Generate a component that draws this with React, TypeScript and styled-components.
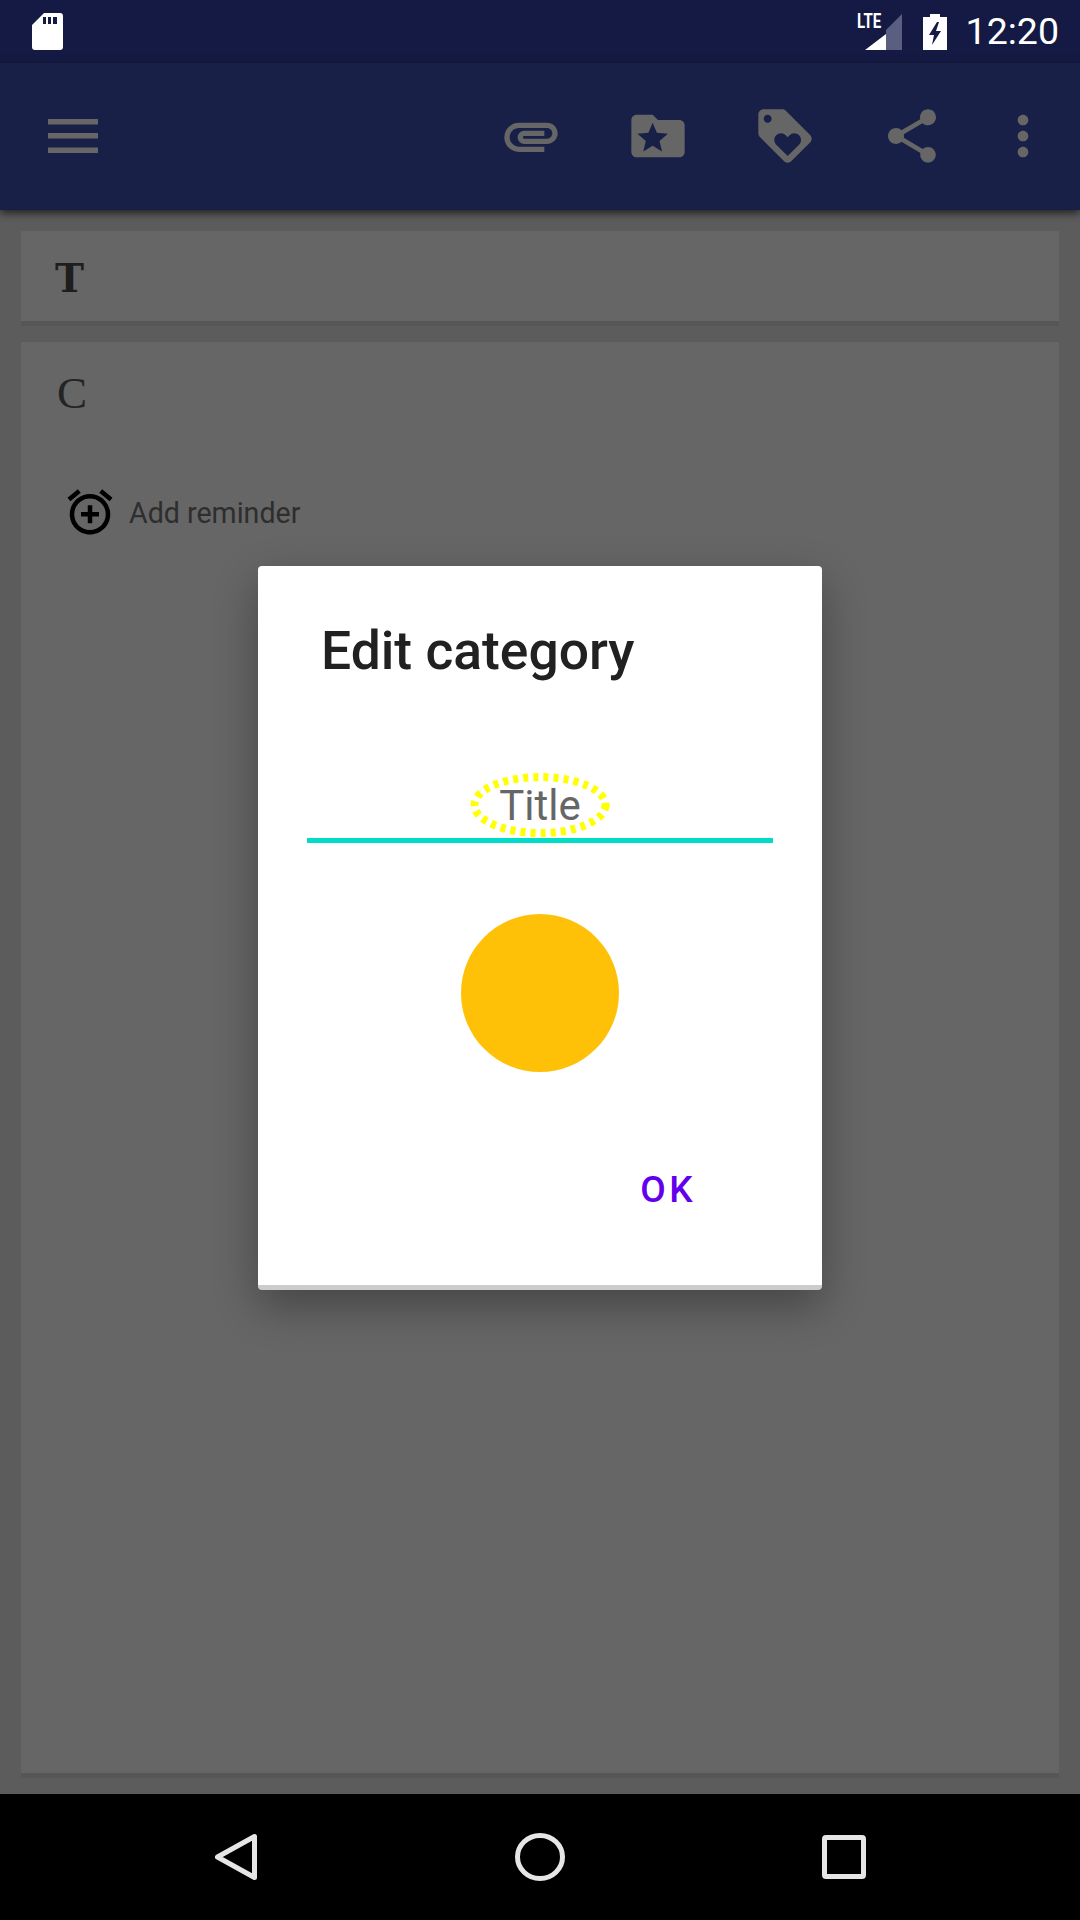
import { createGlobalStyle, styled } from "styled-components";

const Global = createGlobalStyle`
  html, body { margin: 0; padding: 0; background: #000; }
  #root { width: 1080px; height: 1920px; }
`;

const Screen = styled.div`
  position: relative;
  width: 1080px;
  height: 1920px;
  display: flex;
  flex-direction: column;
  overflow: hidden;
  font-family: Roboto, "Liberation Sans", sans-serif;
`;

const StatusBar = styled.div`
  height: 63px;
  flex: none;
  background: #141a43;
  display: flex;
  align-items: center;
  justify-content: space-between;
  padding: 0 21px 0 32px;
  color: #fff;
`;

const StatusRight = styled.div`
  display: flex;
  align-items: center;
`;

const Signal = styled.div`
  position: relative;
  width: 37px;
  height: 36px;
  margin-right: 21px;
`;

const Lte = styled.span`
  position: absolute;
  left: -8px;
  top: 0;
  font-size: 20px;
  font-weight: 700;
  line-height: 15px;
  transform: scaleX(0.75);
  transform-origin: left center;
`;

const Clock = styled.span`
  font-size: 37.5px;
  margin-left: 19px;
  line-height: 63px;
`;

const Toolbar = styled.div`
  height: 147px;
  box-sizing: border-box;
  flex: none;
  background: #182048;
  display: flex;
  align-items: center;
  justify-content: space-between;
  padding: 0 25px 1px 48px;
  box-shadow: 0 3px 8px rgba(0, 0, 0, 0.65);
  position: relative;
  z-index: 1;
`;

const MenuIcon = styled.svg`
  width: 50px;
  height: 34px;
  fill: #666;
  display: block;
`;

const ActionIcon = styled.svg`
  width: 64px;
  height: 64px;
  flex: none;
  fill: #666;
  display: block;
`;

const OverflowIcon = styled(ActionIcon)`
  margin-left: -15.5px;
`;

const Actions = styled.div`
  display: flex;
  align-items: center;
  gap: 63px;
`;

const Content = styled.div`
  flex: 1;
  background: #5c5c5c;
  padding: 21px 21px 16px;
  display: flex;
  flex-direction: column;
  gap: 16px;
`;

const Card = styled.div<{ $grow?: boolean }>`
  background: #666;
  border-bottom: 5px solid #565656;
  flex: ${(p) => (p.$grow ? 1 : "none")};
  padding-left: 34px;
`;

const TitleCard = styled(Card)`
  height: 90px;
  box-sizing: content-box;
  display: flex;
  align-items: center;
`;

const CardTitle = styled.span`
  font-family: "DejaVu Serif", "Liberation Serif", serif;
  font-weight: 700;
  font-size: 39px;
  color: #1e1e1e;
  padding-top: 4px;
`;

const CardBody = styled.div`
  font-family: "Liberation Serif", "DejaVu Serif", serif;
  font-size: 45px;
  color: #242424;
  padding: 26px 0 0 2px;
  line-height: 50px;
`;

const ReminderRow = styled.div`
  display: flex;
  align-items: center;
  gap: 12px;
  margin-top: 67px;
  padding-left: 8px;
`;

const ReminderIcon = styled.svg`
  width: 54px;
  height: 54px;
  fill: #000;
  display: block;
`;

const ReminderText = styled.span`
  font-size: 28.6px;
  color: #2e2e2e;
  padding-top: 2px;
`;

const NavBar = styled.div`
  height: 126px;
  flex: none;
  background: #000;
  display: flex;
  align-items: center;
  justify-content: space-between;
  padding: 0 214px 0 215px;
`;

const Dialog = styled.div`
  position: absolute;
  left: 258px;
  top: 566px;
  width: 564px;
  height: 724px;
  box-sizing: border-box;
  background: #fff;
  border-radius: 4px;
  border-bottom: 5px solid #ccc;
  box-shadow: 0 16px 44px rgba(0, 0, 0, 0.33);
  z-index: 2;
  display: flex;
  flex-direction: column;
  align-items: center;
`;

const DialogTitle = styled.div`
  align-self: flex-start;
  margin: 50px 0 0 63px;
  font-size: 53.4px;
  font-weight: 500;
  line-height: 70px;
  color: #212121;
`;

const Field = styled.div`
  position: relative;
  width: 466px;
  height: 66px;
  margin-top: 86px;
  border-bottom: 5px solid #00dcc8;
  text-align: center;
  font-size: 42px;
  line-height: 68px;
  color: #666;
`;

const Ring = styled.svg`
  position: absolute;
  left: 163px;
  top: 1px;
  width: 140px;
  height: 64px;
`;

const Swatch = styled.div`
  width: 158px;
  height: 158px;
  border-radius: 50%;
  background: #ffc107;
  margin-top: 71px;
`;

const OkButton = styled.div`
  align-self: flex-end;
  margin: 96px 126px 0 0;
  font-size: 37px;
  font-weight: 500;
  letter-spacing: 3.4px;
  color: #6200ee;
`;

export default function App() {
  return (
    <>
      <Global />
      <Screen>
        <StatusBar>
          <svg width="31" height="37" viewBox="0 0 31 37">
            <path fill="#fff" fillRule="evenodd" d="M12 0H28a3 3 0 0 1 3 3V34a3 3 0 0 1-3 3H3a3 3 0 0 1-3-3V12Z M11 4v7h3V4Z M16 4v7h3V4Z M21 4v7h4V4Z" />
          </svg>
          <StatusRight>
            <Signal>
              <Lte>LTE</Lte>
              <svg width="37" height="36" viewBox="0 0 37 36">
                <path fill="#5a5f82" d="M21 36V16L37 0V36Z" />
                <path fill="#fff" d="M0 36 21 20V36Z" />
              </svg>
            </Signal>
            <svg width="24" height="36" viewBox="0 0 24 36">
              <path fill="#fff" fillRule="evenodd" d="M7 0h10v3h7v33H0V3h7Z M14 8 6 21h5l-2 10 9-14h-5l3-9Z" />
            </svg>
            <Clock>12:20</Clock>
          </StatusRight>
        </StatusBar>
        <Toolbar>
          <MenuIcon viewBox="0 0 50 34">
            <path d="M0 0h50v5.5H0ZM0 14h50v5.5H0ZM0 28.5h50V34H0Z" />
          </MenuIcon>
          <Actions>
            <ActionIcon viewBox="0 0 24 24">
              <path d="M2 12.5C2 9.46 4.46 7 7.5 7H18c2.21 0 4 1.79 4 4s-1.79 4-4 4H9.5C8.12 15 7 13.88 7 12.5S8.12 10 9.5 10H17v2H9.41c-.55 0-.55 1 0 1H18c1.1 0 2-.9 2-2s-.9-2-2-2H7.5C5.57 9 4 10.57 4 12.5S5.57 16 7.5 16H17v2H7.5C4.46 18 2 15.54 2 12.5Z" />
            </ActionIcon>
            <ActionIcon viewBox="0 0 24 24">
              <path fillRule="evenodd" d="M20 6h-8l-2-2H4c-1.1 0-1.99.9-1.99 2L2 18c0 1.1.9 2 2 2h16c1.1 0 2-.9 2-2V8c0-1.1-.9-2-2-2Z M10 7 11.59 10.82 15.7 11.15 12.57 13.83 13.53 17.85 10 15.7 6.47 17.85 7.43 13.83 4.3 11.15 8.41 10.82Z" />
            </ActionIcon>
            <ActionIcon viewBox="0 0 24 24">
              <path fillRule="evenodd" d="M21.41 11.58l-9-9C12.05 2.22 11.55 2 11 2H4c-1.1 0-2 .9-2 2v7c0 .55.22 1.05.59 1.42l9 9c.36.36.86.58 1.41.58.55 0 1.05-.22 1.41-.59l7-7c.37-.36.59-.86.59-1.41 0-.55-.23-1.06-.59-1.42zM5.5 7C4.67 7 4 6.33 4 5.5S4.67 4 5.5 4 7 4.67 7 5.5 6.33 7 5.5 7zm11.77 8.27L13 19.54l-4.27-4.27C8.28 14.81 8 14.19 8 13.5c0-1.38 1.12-2.5 2.5-2.5.69 0 1.32.28 1.77.74l.73.72.73-.73c.45-.45 1.08-.73 1.77-.73 1.38 0 2.5 1.12 2.5 2.5 0 .69-.28 1.32-.73 1.77z" />
            </ActionIcon>
            <ActionIcon viewBox="0 0 24 24">
              <path d="M18 16.08c-.76 0-1.44.3-1.96.77L8.91 12.7c.05-.23.09-.46.09-.7s-.04-.47-.09-.7l7.05-4.11c.54.5 1.25.81 2.04.81 1.66 0 3-1.34 3-3s-1.34-3-3-3-3 1.34-3 3c0 .24.04.47.09.7L8.04 9.81C7.5 9.31 6.79 9 6 9c-1.66 0-3 1.34-3 3s1.34 3 3 3c.79 0 1.5-.31 2.04-.81l7.12 4.16c-.05.21-.08.43-.08.65 0 1.61 1.31 2.92 2.92 2.92 1.61 0 2.92-1.31 2.92-2.92s-1.31-2.92-2.92-2.92z" />
            </ActionIcon>
            <OverflowIcon viewBox="0 0 24 24">
              <path d="M12 8c1.1 0 2-.9 2-2s-.9-2-2-2-2 .9-2 2 .9 2 2 2zm0 2c-1.1 0-2 .9-2 2s.9 2 2 2 2-.9 2-2-.9-2-2-2zm0 6c-1.1 0-2 .9-2 2s.9 2 2 2 2-.9 2-2-.9-2-2-2z" />
            </OverflowIcon>
          </Actions>
        </Toolbar>
        <Content>
          <TitleCard>
            <CardTitle>T</CardTitle>
          </TitleCard>
          <Card $grow>
            <CardBody>C</CardBody>
            <ReminderRow>
              <ReminderIcon viewBox="0 0 24 24">
                <path d="M7.88 3.39 6.6 1.86 2 5.71l1.29 1.53 4.59-3.85zM22 5.72l-4.6-3.86-1.29 1.53 4.6 3.86L22 5.72zM12 4c-4.97 0-9 4.03-9 9s4.02 9 9 9c4.97 0 9-4.03 9-9s-4.03-9-9-9zm0 16c-3.87 0-7-3.13-7-7s3.13-7 7-7 7 3.13 7 7-3.13 7-7 7zm1-11h-2v3H8v2h3v3h2v-3h3v-2h-3V9z" />
              </ReminderIcon>
              <ReminderText>Add reminder</ReminderText>
            </ReminderRow>
          </Card>
        </Content>
        <NavBar>
          <svg width="42" height="50" viewBox="0 0 42 50">
            <path d="M39.5 4.5V45.5L2.5 25Z" fill="none" stroke="#e6e6e6" strokeWidth="5" strokeLinejoin="round" />
          </svg>
          <svg width="50" height="48" viewBox="0 0 50 48">
            <ellipse cx="25" cy="24" rx="22.5" ry="21.5" fill="none" stroke="#e6e6e6" strokeWidth="5" />
          </svg>
          <svg width="44" height="44" viewBox="0 0 44 44">
            <rect x="2.5" y="2.5" width="39" height="39" rx="1.5" fill="none" stroke="#e6e6e6" strokeWidth="5" />
          </svg>
        </NavBar>
        <Dialog>
          <DialogTitle>Edit category</DialogTitle>
          <Field>
            Title
            <Ring viewBox="0 0 140 64">
              <ellipse cx="70" cy="32" rx="65.5" ry="28" fill="none" stroke="#ffff00" strokeWidth="8" strokeDasharray="5 5.1" />
            </Ring>
          </Field>
          <Swatch />
          <OkButton>OK</OkButton>
        </Dialog>
      </Screen>
    </>
  );
}
